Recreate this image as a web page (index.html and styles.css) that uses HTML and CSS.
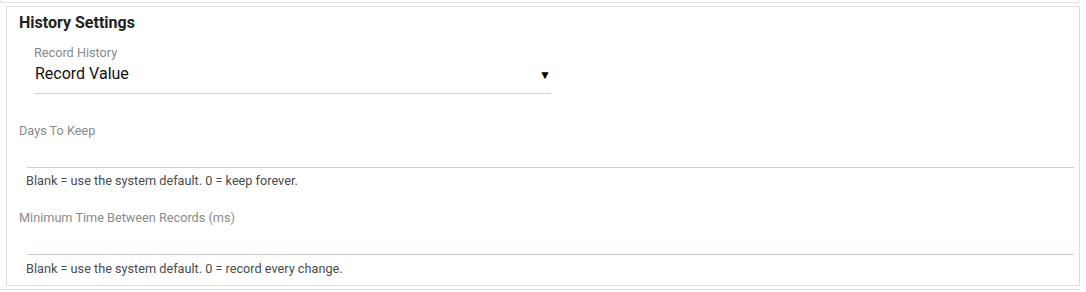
FILE: index.html
```html
<!DOCTYPE html>
<html>
<head>
<meta charset="utf-8">
<link rel="stylesheet" href="styles.css">
</head>
<body>
<div class="prev"></div>
<div class="section">
  <div class="title">History Settings</div>
  <div class="select-field">
    <div class="select-label">Record History</div>
    <div class="select-value"><span>Record Value</span><span class="arrow">▼</span></div>
  </div>
  <div class="field first">
    <div class="field-label">Days To Keep</div>
    <div class="input"></div>
    <div class="help">Blank = use the system default. 0 = keep forever.</div>
  </div>
  <div class="field second">
    <div class="field-label">Minimum Time Between Records (ms)</div>
    <div class="input"></div>
    <div class="help">Blank = use the system default. 0 = record every change.</div>
  </div>
</div>
<div class="next"></div>
</body>
</html>
```

FILE: styles.css
```css
html, body {
  margin: 0;
  padding: 0;
  background: #fff;
  font-family: Roboto, "Liberation Sans", sans-serif;
}
.prev {
  height: 2px;
  margin: 0 7px 0 0;
  border: 1px solid #e0e0e0;
  border-top: none;
}
.section {
  margin: 3px 6px 3px 6px;
  border: 1px solid #dedede;
  padding: 0 5px 9px 12px;
  height: 269px;
}
.next {
  border-top: 1px solid #e0e0e0;
  margin: 0 6px 0 0;
}
.title {
  margin-top: 6px;
  font-size: 16px;
  line-height: 20px;
  font-weight: 700;
  color: #222;
}
.select-field {
  margin-left: 15px;
  width: 517px;
  margin-top: 12px;
  border-bottom: 1px solid #d0d0d0;
}
.select-label {
  font-size: 12.7px;
  line-height: 16px;
  color: #888;
}
.select-value {
  margin-top: 2px;
  padding-bottom: 8px;
  display: flex;
  justify-content: space-between;
  align-items: center;
  font-size: 16px;
  line-height: 20px;
  color: #111;
  padding-left: 1px;
}
.arrow {
  font-size: 12px;
  color: #000;
  margin-right: 0;
  margin-top: 2px;
}
.field {
  margin-top: 21px;
}
.field.first {
  margin-top: 29px;
}
.field-label {
  font-size: 12.7px;
  line-height: 16px;
  color: #8a8a8a;
}
.input {
  margin-left: 8px;
  height: 28px;
  border-bottom: 1px solid #c9d0d7;
}
.help {
  margin-top: 5px;
  margin-left: 7px;
  font-size: 12.7px;
  line-height: 16px;
  color: #4a4a4a;
}
.field.second .help {
  margin-top: 6px;
}
```
